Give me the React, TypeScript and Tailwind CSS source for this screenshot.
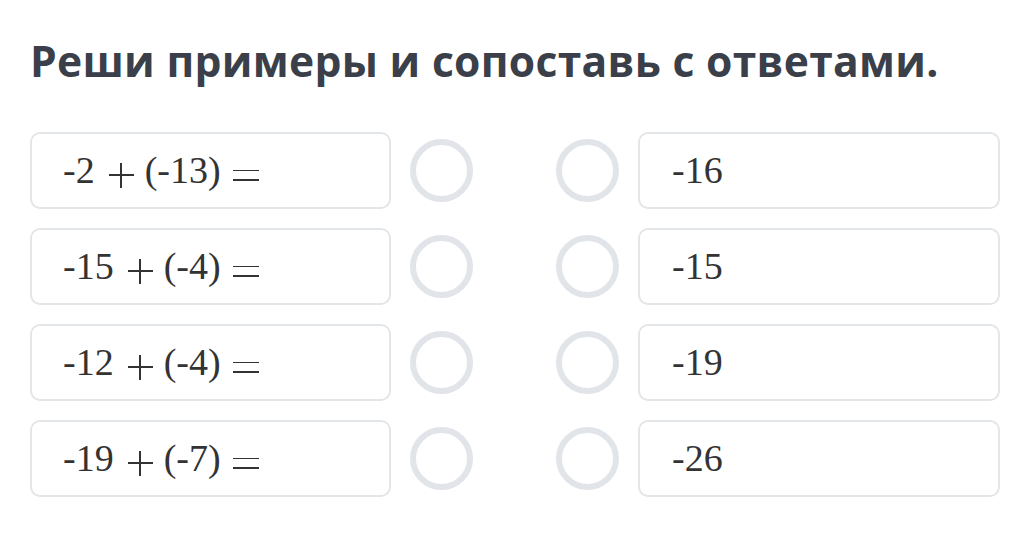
import React from "react";

const left: [string, string][] = [
  ["-2", "(-13)"],
  ["-15", "(-4)"],
  ["-12", "(-4)"],
  ["-19", "(-7)"],
];
const right = ["-16", "-15", "-19", "-26"];

function Circle() {
  return <div className="w-[63px] h-[63px] rounded-full border-[6px] border-[#e1e4e8] bg-white shrink-0" />;
}

function Plus() {
  return (
    <span className="relative inline-block w-[25px] h-[25px] mt-[9px] ml-[14px] mr-[11px] shrink-0">
      <span className="absolute left-0 right-0 top-[11.5px] h-[1.8px] bg-[#333]" />
      <span className="absolute top-0 bottom-0 left-[11.5px] w-[1.8px] bg-[#333]" />
    </span>
  );
}

function Equals() {
  return (
    <span className="inline-flex flex-col justify-between w-[26px] h-[11px] mt-[9px] ml-[12px] shrink-0">
      <span className="h-[1.8px] bg-[#333]" />
      <span className="h-[1.8px] bg-[#333]" />
    </span>
  );
}

export default function App() {
  return (
    <div className="w-[1018px] h-[558px] bg-white pl-[30px] pt-[35px]">
      <h1
        className="text-[42.6px] font-bold text-[#3a3f49] leading-[50px] tracking-[0.3px]"
        style={{ fontFamily: '"Open Sans", sans-serif' }}
      >
        Реши примеры и сопоставь с ответами.
      </h1>
      <div className="mt-[47px] flex flex-col gap-[19px]">
        {left.map((l, i) => (
          <div key={i} className="flex items-center h-[77px]">
            <div
              className="w-[361px] shrink-0 h-[77px] border-2 border-[#e3e6e9] rounded-[10px] flex items-center pl-[31px] text-[38px] text-[#333] whitespace-nowrap"
              style={{ fontFamily: '"Liberation Serif", serif' }}
            >
              <span>{l[0]}</span>
              <Plus />
              <span>{l[1]}</span>
              <Equals />
            </div>
            <div className="ml-[19px]">
              <Circle />
            </div>
            <div className="ml-[83px]">
              <Circle />
            </div>
            <div
              className="ml-[19px] w-[362px] shrink-0 h-[77px] border-2 border-[#e3e6e9] rounded-[10px] flex items-center pl-[32px] text-[38px] text-[#333]"
              style={{ fontFamily: '"Liberation Serif", serif' }}
            >
              {right[i]}
            </div>
          </div>
        ))}
      </div>
    </div>
  );
}
